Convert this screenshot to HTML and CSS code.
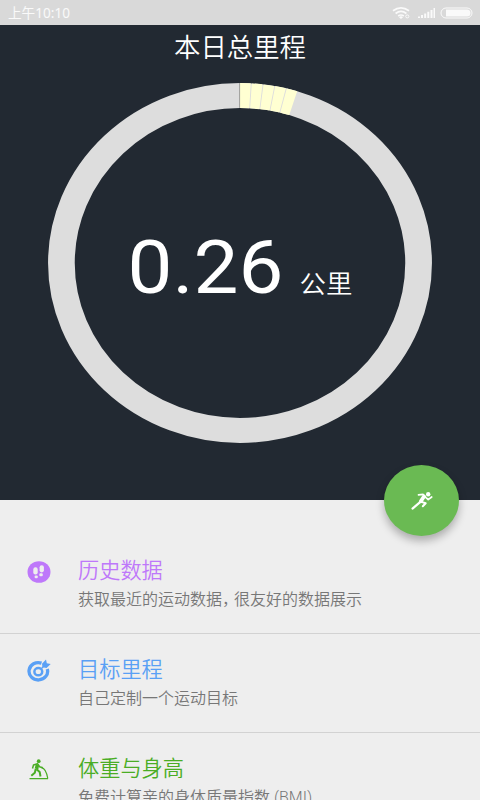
FILE: index.html
```html
<!DOCTYPE html>
<html lang="zh-CN">
<head>
<meta charset="UTF-8">
<meta name="viewport" content="width=device-width, initial-scale=1.0">
<title>本日总里程</title>
<link rel="stylesheet" href="styles.css">
</head>
<body>
  <div class="status-bar">
    <span class="status-time">上午10:10</span>
    <svg class="status-icons" width="82" height="14" viewBox="0 0 82 14">
      <g fill="none" stroke="#fafafa" stroke-width="1.7">
        <path d="M1 4.8Q9 -1.2 17 4.8M3.6 7.5Q9 3.4 14.4 7.5M6.2 10Q9 8 11.8 10"/>
        <ellipse cx="15.3" cy="10.4" rx="1.6" ry="1.5" stroke-width="1"/>
      </g>
      <path fill="#fafafa" d="M9 10l2 1.3L9 13l-2-1.7zM26 10.5h2V12h-2zM29 9h2v3h-2zM32.200 7.500h2V12h-2zM35.300 5.800h2V12h-2zM38.500 4h2v8h-2zM41.500 2h1.500v10h-1.500z"/>
      <rect x="49" y="2" width="31" height="10" rx="5" fill="none" stroke="#fafafa"/>
      <path fill="#fafafa" d="M54 3.500h21a3.500 3.500 0 0 1 0 7H54z"/>
    </svg>
  </div>

  <div class="summary">
    <h1 class="summary-title">本日总里程</h1>
    <svg class="ring" viewBox="0 0 384 384" preserveAspectRatio="none">
      <circle class="ring-track" cx="192" cy="192" r="178.600"/>
      <!-- 进度从顶部开始，每段 1% -->
      <circle class="ring-progress" cx="192" cy="192" r="178.600" pathLength="100" transform="rotate(-90 192 192)"/>
      <path stroke="#8c8c86" stroke-width=".8" d="M191.600 0v26.500"/>
      <text class="ring-value" x="79.500" y="224">0.26</text>
      <text class="ring-unit" x="251.500" y="224.500">公里</text>
    </svg>
    <button class="start" aria-label="开始运动">
      <svg width="22" height="18" viewBox="0 0 22 18">
        <circle cx="17.200" cy="2.300" r="2.200" fill="#fff"/>
        <g fill="none" stroke="#fff" stroke-linecap="round" stroke-linejoin="round">
          <path stroke-width="1.700" d="M7.500 2.800L12 2.400 15 5.600 17.200 7.600 20.700 5"/>
          <path stroke-width="3.800" d="M13 4.500L9.800 9.200"/>
          <path stroke-width="2" d="M9.600 9.600L14.700 11.200 11.800 14.200"/>
          <path stroke-width="2.200" d="M8.800 10.400L1.500 16.600"/>
        </g>
      </svg>
    </button>
  </div>

  <div class="menu">
    <div class="item item-history">
      <svg class="item-icon" width="24" height="24" viewBox="0 0 24 24">
        <ellipse cx="12" cy="12" rx="11.500" ry="10.800" fill="#be78fa"/>
        <g fill="#eee">
          <rect x="6.300" y="7.300" width="4.400" height="7.200" rx="2.100"/>
          <rect x="7.600" y="15.400" width="3.200" height="2.800" rx="1.200"/>
          <rect x="12.600" y="5.200" width="4.300" height="7.200" rx="2.100"/>
          <rect x="12.300" y="13.300" width="3.500" height="2.900" rx="1.300"/>
        </g>
      </svg>
      <div class="item-text">
        <h2>历史数据</h2>
        <p>获取最近的运动数据<span class="comma">，</span>很友好的数据展示</p>
      </div>
    </div>
    <div class="item item-target">
      <svg class="item-icon" width="24" height="24" viewBox="0 0 24 24">
        <g fill="none" stroke="#5aa0f5">
          <path stroke-width="3.300" d="M14.500 4.100A9.300 8.700 0 1 0 20.300 10"/>
          <ellipse cx="11.300" cy="12.700" rx="3.900" ry="3.600" stroke-width="2.500"/>
          <path stroke-width="1.500" d="M13.500 10.500L19 5"/>
        </g>
        <path fill="#5aa0f5" d="M15 4.800L19 .6 19.800 4.200 23.700 5 19.500 9 15.500 8.200z"/>
      </svg>
      <div class="item-text">
        <h2>目标里程</h2>
        <p>自己定制一个运动目标</p>
      </div>
    </div>
    <div class="item item-body">
      <svg class="item-icon" width="24" height="24" viewBox="0 0 24 24">
        <circle cx="11.700" cy="3.200" r="1.900" fill="#4aad25"/>
        <g fill="none" stroke="#4aad25" stroke-linejoin="round">
          <path stroke-width="1.500" d="M5.500 10.500L6.500 7 10.500 5.700 12.500 8.700 15.800 9.800"/>
          <path stroke-width="3.600" d="M10.500 6.500L9.500 11"/>
          <path stroke-width="2" d="M8.700 11L7.800 14.800 4.300 17.800M9.500 11.300L12.700 14 13.500 18.500"/>
          <path stroke-width="1.200" d="M2.500 20.700H21M14.500 9.700Q19 10.500 20.800 20.500"/>
        </g>
      </svg>
      <div class="item-text">
        <h2>体重与身高</h2>
        <p>免费计算亲的身体质量指数 (BMI)</p>
      </div>
    </div>
  </div>
</body>
</html>
```
FILE: styles.css
```css
body {
  display: flex;
  flex-direction: column;
  height: 100vh;
  margin: 0;
  font-family: Roboto, "Noto Sans CJK SC", sans-serif;
  background-color: #eee;
  overflow: hidden;
}

.status-bar {
  display: flex;
  flex: none;
  justify-content: space-between;
  align-items: center;
  box-sizing: border-box;
  height: 25px;
  padding: 0 6px 0 8px;
  background-color: #d9d9d9;
  color: #fafafa;
}

.status-time {
  font-family: "Noto Sans", "Noto Sans CJK SC", sans-serif;
  font-size: 13.6px;
  line-height: 24px;
}

.summary {
  display: flex;
  flex: none;
  flex-direction: column;
  align-items: center;
  position: relative;
  height: 475px;
  background-color: #222932;
}

.summary-title {
  margin: 0;
  height: 57.5px;
  color: #fff;
  font-size: 26.4px;
  font-weight: 350;
  line-height: 46px;
}

.ring {
  width: 384px;
  height: 360px;
}

.ring-track {
  fill: none;
  stroke: #ddd;
  stroke-width: 26.7;
}

.ring-progress {
  fill: none;
  stroke: #ffffd2;
  stroke-width: 26.7;
  stroke-dasharray: .9 .08 .9 .08 .9 .08 .9 .08 .9 95.18;
}

.ring-value {
  fill: #fff;
  font-size: 80px;
}

.ring-unit {
  fill: #fff;
  font-size: 26.5px;
  font-weight: 350;
}

/* 悬浮按钮，压在上下两块的交界处 */
.start {
  display: flex;
  justify-content: center;
  align-items: center;
  position: absolute;
  right: 21px;
  bottom: -36px;
  width: 75px;
  height: 71px;
  padding: 0;
  border: none;
  border-radius: 50%;
  background-color: #6aba53;
  box-shadow: 0 5px 8px rgba(0, 0, 0, 0.28);
}

.menu {
  padding-top: 35px;
}

.item {
  display: flex;
  box-sizing: border-box;
  height: 98.8px;
  padding: 20px 0 0 27px;
  border-bottom: 1px solid #d2d2d2;
}

.item-icon {
  flex: none;
  margin: 5px 27px 0 0;
}

.item h2 {
  margin: 0;
  font-size: 21.2px;
  font-weight: 350;
  line-height: 32px;
}

.item p {
  margin: 0;
  color: #777;
  font-size: 16px;
  font-weight: 350;
  line-height: 26px;
  white-space: nowrap;
}

.comma {
  margin-right: 4px;
  font-feature-settings: "halt";
}

.item-history h2 {
  color: #be78fa;
}

.item-target h2 {
  color: #5aa0f5;
}

.item-body h2 {
  color: #4aad25;
}
```
